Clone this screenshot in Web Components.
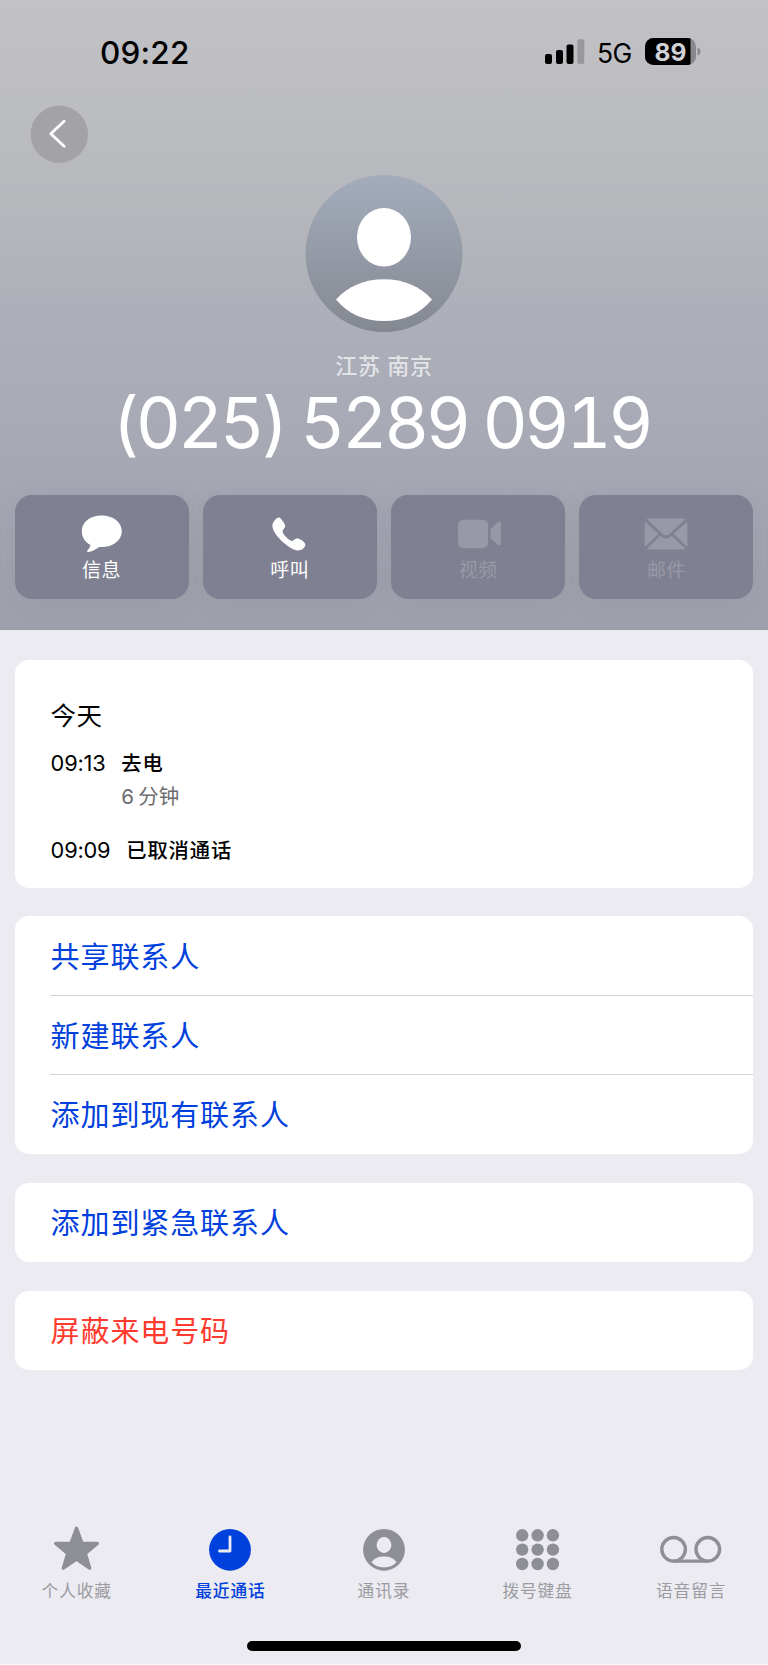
<!DOCTYPE html>
<html lang="zh-CN">
<head>
<meta charset="UTF-8">
<meta name="viewport" content="width=device-width, initial-scale=1.0">
<title>最近通话</title>
<style>
  body {
    margin: 0;
    background: #ebebf1;
    font-family: Inter, "Noto Sans CJK SC", sans-serif;
  }
</style>
</head>
<body>
<call-details></call-details>

<script>
class StatusBar extends HTMLElement {
  connectedCallback() {
    this.attachShadow({ mode: 'open' });
    this.shadowRoot.innerHTML = `
      <style>
        :host {
          display: flex;
          justify-content: space-between;
          height: 105px;
          padding: 0 67px 0 100px;
          box-sizing: border-box;
          color: #000;
        }
        .time {
          margin-top: 33px;
          font-size: 31.5px;
          line-height: 40px;
          font-weight: 500;
          letter-spacing: 0.2px;
        }
        .right {
          display: flex;
          align-items: flex-start;
        }
        .signal { margin-top: 38px; }
        .net {
          margin: 38px 0 0 12px;
          width: 48px;
          font-size: 26.5px;
          line-height: 31px;
          letter-spacing: -0.5px;
        }
        .battery { margin-top: 37px; }
        svg { display: block; }
      </style>
      <div class="time">09:22</div>
      <div class="right">
        <svg class="signal" width="40" height="27" viewBox="0 0 40 27">
          <rect x="0" y="16" width="7" height="10" rx="2"/>
          <rect x="11" y="12" width="7" height="14" rx="2"/>
          <rect x="21.5" y="6.5" width="7" height="19.5" rx="2"/>
          <rect x="32.3" y="1.3" width="7" height="24.7" rx="2" fill="#98989d"/>
        </svg>
        <div class="net">5G</div>
        <svg class="battery" width="56" height="30" viewBox="0 0 56 30">
          <clipPath id="fill"><rect width="45.5" height="30"/></clipPath>
          <rect x="0" y="1" width="51" height="27" rx="8.5" fill="#87878d"/>
          <rect x="0" y="1" width="51" height="27" rx="8.5" clip-path="url(#fill)"/>
          <path d="M52.5 10.5C56.5 12 56.5 17 52.5 18.5Z" fill="#87878d"/>
          <text x="25.5" y="23.5" text-anchor="middle" font-size="24.5" font-weight="700" fill="#d2d2d6">89</text>
        </svg>
      </div>
    `;
  }
}
customElements.define('status-bar', StatusBar);

class ContactHeader extends HTMLElement {
  connectedCallback() {
    this.attachShadow({ mode: 'open' });
    this.shadowRoot.innerHTML = `
      <style>
        :host {
          display: flex;
          flex-direction: column;
          height: 630px;
          background: linear-gradient(#c2c2c6 0, #bcbdc1 110px, #b6b7bc 215px, #acaeb8 330px, #a6a8b4 460px, #9d9faa 630px);
          color: #fff;
        }
        .back {
          display: block;
          margin-left: 30px;
        }
        .avatar {
          display: block;
          margin: 11px auto 0;
        }
        .place {
          margin-top: 16px;
          height: 32px;
          line-height: 34px;
          font-size: 22px;
          font-weight: 500;
          letter-spacing: 0.7px;
          text-align: center;
          color: #e2e3e7;
        }
        .number {
          height: 90px;
          padding-right: 6px;
          line-height: 84px;
          font-size: 70px;
          font-variant-numeric: tabular-nums;
          letter-spacing: -3.5px;
          word-spacing: -0.5px;
          text-align: center;
          white-space: nowrap;
        }
        .actions {
          display: grid;
          grid-template-columns: repeat(4, 1fr);
          gap: 14.4px;
          margin: 24.3px 14.6px 0;
        }
      </style>
      <status-bar></status-bar>
      <svg class="back" width="59" height="59" viewBox="0 0 59 59">
        <circle cx="29.3" cy="29.2" r="28.7" fill="#a3a3a7"/>
        <path d="M34.1 16.2L20.8 28.7L34.1 41.2" fill="none" stroke="#fff" stroke-width="2.8" stroke-linecap="round" stroke-linejoin="round"/>
      </svg>
      <svg class="avatar" width="158" height="158" viewBox="0 0 158 158">
        <defs>
          <linearGradient id="disc" x1="0" y1="0" x2="0" y2="1">
            <stop offset="0" stop-color="#a4acbc"/>
            <stop offset="1" stop-color="#848890"/>
          </linearGradient>
        </defs>
        <circle cx="79" cy="78.5" r="78.5" fill="url(#disc)"/>
        <ellipse cx="79" cy="62.2" rx="27" ry="29.3" fill="#fff"/>
        <path d="M31 124.5C43 111.5 59.5 104.3 79 104.3S115 111.5 127 124.5C115 139 98.5 146 79 146S43 139 31 124.5Z" fill="#fff"/>
      </svg>
      <div class="place">江苏 南京</div>
      <div class="number">(025) 5289 0919</div>
      <div class="actions">
        <action-button>
          <svg slot="icon" width="46" height="40" viewBox="0 0 46 40">
            <path d="M22.5 0.4C34 0.4 42.8 7.1 42.8 16.2S34 32.1 22.5 32.1C21.3 32.1 20.3 32.1 19.8 32.3C16.3 34.4 12.3 37.1 9.3 37.1C8.2 37.1 7.7 35.7 8.8 34.7C10.5 33.2 11.2 31.7 11.4 29.9C6 27 2.8 21.900 2.8 16.2C2.8 7.1 11 0.4 22.500 0.4Z"/>
          </svg>
          信息
        </action-button>
        <action-button>
          <svg slot="icon" width="46" height="40" viewBox="0 0 46 40">
            <path d="M6.5 7C7.8 4.9 9.8 2.7 11.8 2.5C13.6 2.3 18.2 9 18.2 11C18.2 13.1 15.4 14.5 15.6 16.7C15.9 19.3 22.3 25.7 24.7 25.9C26.7 26 28.3 23.3 30.3 23.3C32.5 23.3 38.3 27.5 38.4 29.5C38.5 32.5 34.3 35.5 31 35.5C23.5 35.5 4.2 19 5.5 10C5.7 8.7 5.9 7.9 6.5 7Z"/>
          </svg>
          呼叫
        </action-button>
        <action-button disabled>
          <svg slot="icon" width="46" height="40" viewBox="0 0 46 40">
            <rect x="3" y="4.7" width="30" height="28.5" rx="5.5"/>
            <path d="M35.7 14.4L42.5 7.6C43.7 6.6 45.8 6.6 45.8 8.6V28.7C45.8 30.6 43.7 30.7 42.5 29.6L35.7 23.2Z"/>
          </svg>
          视频
        </action-button>
        <action-button disabled>
          <svg slot="icon" width="46" height="40" viewBox="0 0 46 40">
            <path d="M3.5 3.8Q4.3 3.5 5.5 3.5H40Q41.5 3.5 42.5 3.9L27 18.5Q23 22.5 19 18.5Z"/>
            <path d="M1.7 6.5L15.5 18.7L1.7 31.9ZM44.3 6.5L30.5 18.7L44.3 31.9Z"/>
            <path d="M3.8 33.7L17.3 20.7L18.5 21.8Q23 25.8 27.5 21.8L28.7 20.7L42.2 33.7Q41.5 34.5 40 34.5H6Q4.5 34.5 3.8 33.7Z"/>
          </svg>
          邮件
        </action-button>
      </div>
    `;
  }
}

class ActionButton extends HTMLElement {
  connectedCallback() {
    this.attachShadow({ mode: 'open' });
    this.shadowRoot.innerHTML = `
      <style>
        :host {
          display: flex;
          flex-direction: column;
          align-items: center;
          height: 104px;
          padding-top: 19.5px;
          box-sizing: border-box;
          border-radius: 17px;
          background: #7f8192;
          box-shadow: 0 2px 24px rgba(90, 92, 110, 0.08);
          color: #fff;
          fill: currentColor;
        }
        :host([disabled]) { color: #9899a7; }
        .label {
          height: 30px;
          line-height: 30px;
          margin-top: 1.5px;
          font-size: 19px;
          letter-spacing: 0.5px;
        }
      </style>
      <slot name="icon"></slot>
      <div class="label"><slot></slot></div>
    `;
  }
}
customElements.define('action-button', ActionButton);
customElements.define('contact-header', ContactHeader);

class ListCard extends HTMLElement {
  connectedCallback() {
    this.attachShadow({ mode: 'open' });
    this.shadowRoot.innerHTML = `
      <style>
        :host {
          display: block;
          border-radius: 14px;
          background: #fff;
          overflow: hidden;
        }
      </style>
      <slot></slot>
    `;
  }
}
customElements.define('list-card', ListCard);

class ListRow extends HTMLElement {
  connectedCallback() {
    this.attachShadow({ mode: 'open' });
    this.shadowRoot.innerHTML = `
      <style>
        :host {
          display: block;
          height: 79.2px;
          padding-left: 35.4px;
          color: #0040dd;
        }
        :host([danger]) { color: #ff3b30; }
        .text {
          height: 100%;
          padding: 1.3px 0 0 0.6px;
          box-sizing: border-box;
          line-height: 79px;
          font-size: 29px;
          letter-spacing: 0.9px;
        }
        :host([divider]) .text { border-bottom: 1px solid #d3d3d6; }
      </style>
      <div class="text"><slot></slot></div>
    `;
  }
}
customElements.define('list-row', ListRow);

class CallEntry extends HTMLElement {
  connectedCallback() {
    this.attachShadow({ mode: 'open' });
    this.shadowRoot.innerHTML = `
      <style>
        :host {
          display: flex;
          font-size: 21.8px;
          line-height: 33px;
          color: #000;
        }
        .time {
          margin-right: 15.8px;
          letter-spacing: -0.2px;
        }
        .kind {
          font-size: 20.3px;
          font-weight: 500;
          letter-spacing: 0.9px;
        }
        ::slotted([slot="length"]) {
          display: block;
          font-size: 20.5px;
          word-spacing: -1.5px;
          color: #6c6c70;
        }
      </style>
      <div class="time">${this.getAttribute('time')}</div>
      <div>
        <div class="kind"><slot></slot></div>
        <slot name="length"></slot>
      </div>
    `;
  }
}
customElements.define('call-entry', CallEntry);

class TabItem extends HTMLElement {
  connectedCallback() {
    this.attachShadow({ mode: 'open' });
    this.shadowRoot.innerHTML = `
      <style>
        :host {
          display: flex;
          flex: 1;
          flex-direction: column;
          align-items: center;
          color: #8e8e96;
          fill: currentColor;
        }
        :host([active]) { color: #0040dd; }
        .label {
          height: 26px;
          line-height: 26px;
          margin-top: 2px;
          font-size: 16.7px;
          letter-spacing: 0.9px;
          color: #9b9ba1;
        }
        :host([active]) .label {
          color: inherit;
          font-weight: 500;
        }
      </style>
      <slot name="icon"></slot>
      <div class="label"><slot></slot></div>
    `;
  }
}
customElements.define('tab-item', TabItem);

class TabBar extends HTMLElement {
  connectedCallback() {
    // 3x3 keypad dots
    let dots = '';
    for (const y of [9.3, 23.6, 38]) {
      for (const x of [16.2, 31.6, 46.9]) {
        dots += `<circle cx="${x}" cy="${y}" r="6.2"/>`;
      }
    }
    this.attachShadow({ mode: 'open' });
    this.shadowRoot.innerHTML = `
      <style>
        :host { display: block; }
        .tabs { display: flex; height: 115px; }
        .home {
          width: 274px;
          height: 9.5px;
          margin: 0 auto;
          border-radius: 5px;
          background: #000;
        }
      </style>
      <div class="tabs">
        <tab-item>
          <svg slot="icon" width="64" height="50" viewBox="0 0 64 50">
            <path d="M31.5 2.3L37 17.4H52.3L40.3 27.4L44.7 42.2L31.5 33L18.3 42.2L22.7 27.4L10.7 17.4H26Z" stroke="currentColor" stroke-width="3.4" stroke-linejoin="round"/>
          </svg>
          个人收藏
        </tab-item>
        <tab-item active>
          <svg slot="icon" width="64" height="50" viewBox="0 0 64 50">
            <circle cx="32" cy="23.8" r="20.9"/>
            <path d="M32 11V25H21.5" fill="none" stroke="#ebebf1" stroke-width="2.8" stroke-linecap="round" stroke-linejoin="round"/>
          </svg>
          最近通话
        </tab-item>
        <tab-item>
          <svg slot="icon" width="64" height="50" viewBox="0 0 64 50">
            <circle cx="32" cy="23.8" r="20.9"/>
            <ellipse cx="32" cy="19" rx="7.4" ry="7.9" fill="#ebebf1"/>
            <path d="M19.5 36.3C22 32.5 26 30.5 32 30.5S42 32.5 44.5 36.3C41.5 39.7 37 41.5 32 41.5S22.5 39.7 19.5 36.3Z" fill="#ebebf1"/>
          </svg>
          通讯录
        </tab-item>
        <tab-item>
          <svg slot="icon" width="64" height="50" viewBox="0 0 64 50">${dots}</svg>
          拨号键盘
        </tab-item>
        <tab-item>
          <svg slot="icon" width="64" height="50" viewBox="0 0 64 50" fill="none" stroke="currentColor" stroke-width="3.4">
            <circle cx="14.6" cy="23.3" r="11.8"/>
            <circle cx="48.8" cy="23.3" r="11.8"/>
            <path d="M14.6 35.1H48.8"/>
          </svg>
          语音留言
        </tab-item>
      </div>
      <div class="home"></div>
    `;
  }
}
customElements.define('tab-bar', TabBar);

class CallDetails extends HTMLElement {
  connectedCallback() {
    this.attachShadow({ mode: 'open' });
    this.shadowRoot.innerHTML = `
      <style>
        :host {
          display: flex;
          flex-direction: column;
          height: 1665px;
          box-sizing: border-box;
          border-bottom: 1px solid #f8f8fa;
          background: #ebebf1;
        }
        main {
          display: flex;
          flex: 1;
          flex-direction: column;
          gap: 28.7px;
          padding: 30.4px 14.6px 0;
        }
        .history {
          height: 227.3px;
          padding: 37px 36px 0;
          box-sizing: border-box;
        }
        .day {
          height: 38px;
          line-height: 38px;
          font-size: 25.5px;
          letter-spacing: 0.5px;
        }
        .history call-entry { margin-top: 11.6px; }
        .history call-entry + call-entry { margin-top: 21px; }
        tab-bar { height: 138px; }
      </style>
      <contact-header></contact-header>
      <main>
        <list-card class="history">
          <div class="day">今天</div>
          <call-entry time="09:13">去电<span slot="length">6 分钟</span></call-entry>
          <call-entry time="09:09">已取消通话</call-entry>
        </list-card>
        <list-card>
          <list-row divider>共享联系人</list-row>
          <list-row divider>新建联系人</list-row>
          <list-row>添加到现有联系人</list-row>
        </list-card>
        <list-card>
          <list-row>添加到紧急联系人</list-row>
        </list-card>
        <list-card>
          <list-row danger>屏蔽来电号码</list-row>
        </list-card>
      </main>
      <tab-bar></tab-bar>
    `;
  }
}
customElements.define('call-details', CallDetails);
</script>
</body>
</html>
